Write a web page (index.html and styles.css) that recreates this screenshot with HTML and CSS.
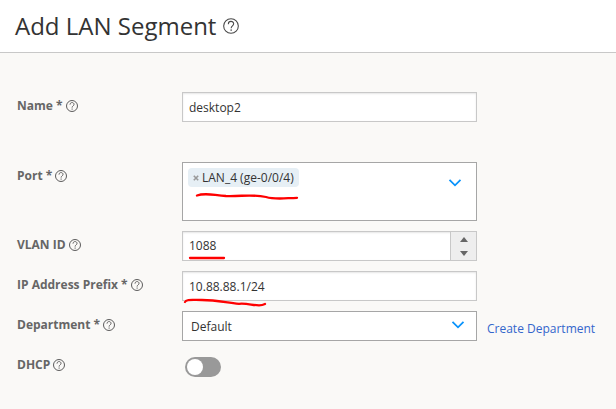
FILE: index.html
```html
<!DOCTYPE html>
<html lang="en">
<head>
<meta charset="utf-8">
<title>Add LAN Segment</title>
<link rel="stylesheet" href="styles.css">
</head>
<body>
<svg class="defs" width="0" height="0" aria-hidden="true">
  <symbol id="help" viewBox="0 0 12 12">
    <circle cx="6" cy="6" r="5.5"/>
    <path d="M4 4.6C4 1.9 8 1.9 8 4.4C8 5.9 6.1 5.9 6.1 7.6M6.1 8.5V9.7"/>
  </symbol>
</svg>
<header class="header">
  <h1 class="title">Add LAN Segment</h1>
  <svg class="help help-large"><use href="#help"/></svg>
</header>
<main class="form">
  <div class="row row-name">
    <div class="label"><span>Name *</span><svg class="help"><use href="#help"/></svg></div>
    <div class="input"><span class="value">desktop2</span></div>
  </div>
  <div class="row">
    <div class="label"><span>Port *</span><svg class="help"><use href="#help"/></svg></div>
    <div class="input select multi">
      <div class="chip"><svg class="remove" viewBox="0 0 6 6"><path d="M.8 .8L5.2 5.2M5.2 .8L.8 5.2"/></svg><span>LAN_4 (ge-0/0/4)</span></div>
      <svg class="chevron" viewBox="0 0 14 10"><path d="M1.5 1.8L7 7.3L12.5 1.8"/></svg>
      <svg class="mark mark-port" viewBox="0 0 106 10"><path d="M2 3.5C10 .5 17 3 31 4C47 4.5 57 2 71 5C81 8 91 6 102 5.8"/></svg>
    </div>
  </div>
  <div class="row">
    <div class="label"><span>VLAN ID</span><svg class="help"><use href="#help"/></svg></div>
    <div class="input">
      <span>1088</span>
      <div class="spinner"><i class="up"></i><i class="down"></i></div>
      <svg class="mark mark-vlan" viewBox="0 0 40 6"><path d="M2 3H36"/></svg>
    </div>
  </div>
  <div class="row">
    <div class="label"><span>IP Address Prefix *</span><svg class="help"><use href="#help"/></svg></div>
    <div class="input">
      <span class="value">10.88.88.1/24</span>
      <svg class="mark mark-ip" viewBox="0 0 86 12"><path d="M2 5C3 2 9 3 19 3C35 3 44 6 56 6.8C65 6.2 69 8.3 76 8.3C79 8.3 80 8 82 7"/></svg>
    </div>
  </div>
  <div class="row">
    <div class="label"><span>Department *</span><svg class="help"><use href="#help"/></svg></div>
    <div class="input select">
      <span class="value">Default</span>
      <svg class="chevron" viewBox="0 0 14 10"><path d="M1.5 1.8L7 7.3L12.5 1.8"/></svg>
    </div>
    <a class="link">Create Department</a>
  </div>
  <div class="row">
    <div class="label"><span>DHCP</span><svg class="help"><use href="#help"/></svg></div>
    <div class="toggle"><i class="knob"></i></div>
  </div>
</main>
</body>
</html>
```

FILE: styles.css
```css
* { box-sizing: border-box; }
body {
  margin: 0;
  height: 409px;
  overflow: hidden;
  background: #faf9f7;
  color: #333;
  font: 12px/18px "Open Sans", "Noto Sans", sans-serif;
  white-space: nowrap;
}
.defs { position: absolute; }
.header {
  display: flex;
  align-items: center;
  gap: 6px;
  height: 53px;
  padding: 0 0 1px 15px;
  background: #fff;
  border-bottom: 1px solid #c8c8c8;
}
.title {
  margin: 0;
  width: 202px;
  font-size: 24px;
  line-height: 32px;
  font-weight: 400;
}
.help {
  flex: none;
  width: 12px;
  height: 12px;
  fill: none;
  stroke: #5c5c5c;
  stroke-width: 1;
}
.help-large { width: 16px; height: 16px; stroke: #484848; stroke-width: .8; }
.form {
  display: flex;
  flex-direction: column;
  gap: 10px;
  padding: 39px 0 0 17px;
}
.row { display: flex; align-items: flex-start; }
.row-name { margin-bottom: 30px; }
.label {
  display: flex;
  align-items: center;
  gap: 3px;
  width: 165px;
  height: 28px;
  color: #666;
  font-weight: 700;
}
.input {
  position: relative;
  display: flex;
  align-items: center;
  justify-content: space-between;
  width: 295px;
  height: 30px;
  padding-left: 6px;
  background: #fff;
  border: 1px solid #c8c8c8;
  box-shadow: inset 0 1px 2px #e6e6e6;
}
.value { padding-top: 2px; }
.select {
  padding: 0 11px 0 8px;
  border-color: #a6a6a6;
  box-shadow: none;
}
.multi {
  height: 59px;
  align-items: flex-start;
  padding: 5px 14px 0 5px;
}
.multi .chevron { margin-top: 10px; }
.chip {
  display: flex;
  align-items: center;
  gap: 3px;
  width: 111px;
  height: 19px;
  padding-left: 5px;
  border-radius: 4px;
  background: #e6eff5;
}
.remove { width: 6px; height: 6px; fill: none; stroke: #999; stroke-width: 1.6; }
.chevron { width: 14px; height: 10px; margin-bottom: 2px; fill: none; stroke: #0a93fb; stroke-width: 1.8; }
.spinner {
  display: flex;
  flex-direction: column;
  align-items: center;
  justify-content: space-between;
  width: 26px;
  height: 28px;
  padding: 5px 0 4px;
  background: #eee;
  border-left: 1px solid #c8c8c8;
}
.up, .down { border: 4px solid transparent; border-width: 0 4px; }
.up { border-bottom: 5px solid #666; }
.down { border-top: 5px solid #666; }
.mark {
  position: absolute;
  z-index: 1;
  fill: none;
  stroke: #fe0000;
  stroke-width: 2.3;
  stroke-linecap: round;
  stroke-linejoin: round;
}
.mark-port { left: 12px; top: 29px; width: 106px; height: 10px; }
.mark-vlan { left: 5px; top: 23px; width: 40px; height: 6px; }
.mark-ip { left: 0; top: 25px; width: 86px; height: 12px; }
.link { margin: 9px 0 0 10px; color: #3366cc; }
.toggle {
  width: 36px;
  height: 20px;
  margin: 6px 0 0 3px;
  padding: 2px;
  border-radius: 10px;
  background: #999;
}
.knob { display: block; width: 16px; height: 16px; border-radius: 50%; background: #fff; }
```
